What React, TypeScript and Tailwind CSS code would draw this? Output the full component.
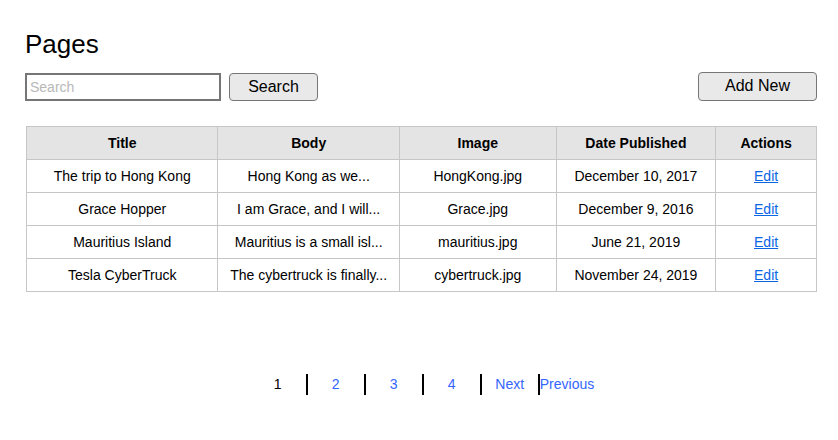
import React from 'react';

const rows = [
  { title: 'The trip to Hong Kong', body: 'Hong Kong as we...', image: 'HongKong.jpg', date: 'December 10, 2017' },
  { title: 'Grace Hopper', body: 'I am Grace, and I will...', image: 'Grace.jpg', date: 'December 9, 2016' },
  { title: 'Mauritius Island', body: 'Mauritius is a small isl...', image: 'mauritius.jpg', date: 'June 21, 2019' },
  { title: 'Tesla CyberTruck', body: 'The cybertruck is finally...', image: 'cybertruck.jpg', date: 'November 24, 2019' },
];

export default function App() {
  return (
    <div className="min-h-screen w-[838px] h-[440px] bg-white text-black font-['Liberation_Sans',Arial,sans-serif]">
      <div className="pl-[25px] pr-[21px] pt-[29px]">
        <h1 className="text-[26px] leading-[30px]">Pages</h1>

        {/* Search bar */}
        <div className="mt-[14px] flex items-center justify-between">
          <div className="flex items-center gap-[8px]">
            <input
              placeholder="Search"
              className="w-[196px] h-[28px] border-2 border-[#767676] px-[3px] text-[14px] placeholder:text-[#b8b8b8] outline-none"
            />
            <button className="w-[89px] h-[28px] rounded-[4px] border border-[#767676] bg-[#e9e9e9] text-[16px]">
              Search
            </button>
          </div>
          <button className="w-[119px] h-[29px] -mt-[2px] rounded-[4px] border border-[#767676] bg-[#e9e9e9] text-[16px]">
            Add New
          </button>
        </div>

        {/* Table */}
        <table className="mt-[25px] ml-[1px] border-collapse table-fixed text-[14px] text-center">
          <colgroup>
            <col className="w-[192px]" />
            <col className="w-[182px]" />
            <col className="w-[157px]" />
            <col className="w-[160px]" />
            <col className="w-[101px]" />
          </colgroup>
          <thead>
            <tr className="bg-[#e4e4e4]">
              {['Title', 'Body', 'Image', 'Date Published', 'Actions'].map((h) => (
                <th key={h} className="h-[33px] border border-[#c6c6c6] font-bold p-0">
                  {h}
                </th>
              ))}
            </tr>
          </thead>
          <tbody>
            {rows.map((r) => (
              <tr key={r.title}>
                <td className="h-[33px] border border-[#c6c6c6] p-0">{r.title}</td>
                <td className="h-[33px] border border-[#c6c6c6] p-0">{r.body}</td>
                <td className="h-[33px] border border-[#c6c6c6] p-0">{r.image}</td>
                <td className="h-[33px] border border-[#c6c6c6] p-0">{r.date}</td>
                <td className="h-[33px] border border-[#c6c6c6] p-0">
                  <a href="#" className="text-[#0a66e4] underline">Edit</a>
                </td>
              </tr>
            ))}
          </tbody>
        </table>
      </div>

      {/* Pagination */}
      <div className="mt-[82px] flex justify-center pl-[6px] text-[14px] leading-[21px]">
        <span className="w-[58px] text-center border-r-2 border-black">1</span>
        {['2', '3', '4', 'Next'].map((p) => (
          <a key={p} href="#" className="w-[58px] text-center border-r-2 border-black text-[#3366ff]">
            {p}
          </a>
        ))}
        <a href="#" className="text-[#3366ff]">Previous</a>
      </div>
    </div>
  );
}
